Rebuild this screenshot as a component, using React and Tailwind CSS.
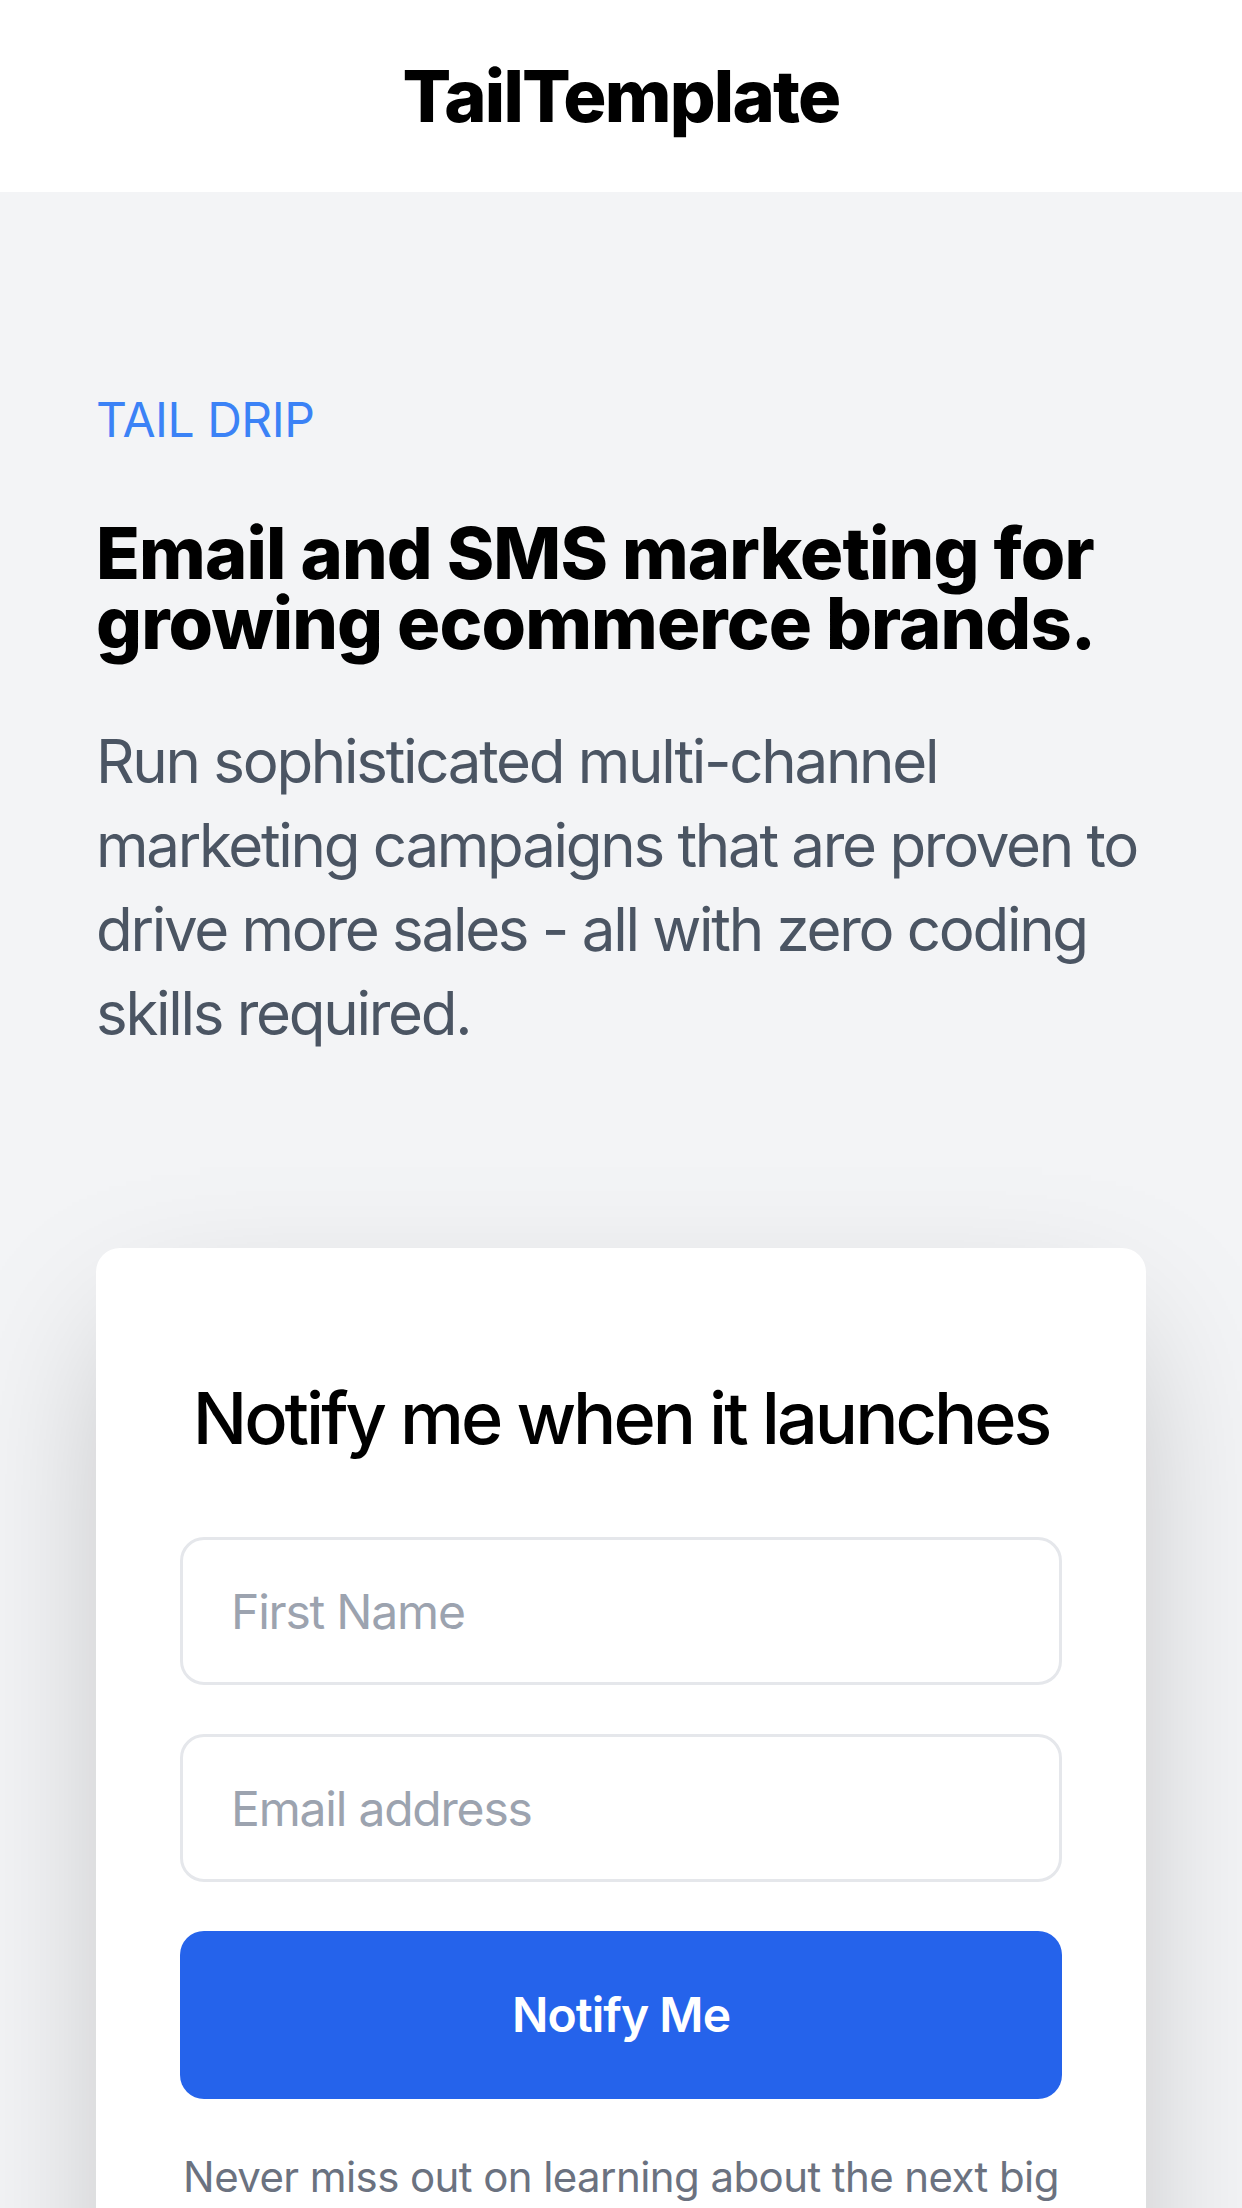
import React from "react";

const App = () => {
  return (
    <div className="min-h-screen bg-[#f3f4f6] font-['Inter','Noto_Sans',sans-serif]">
      {/* Header */}
      <header className="bg-white py-[48px]">
        <h1 className="text-center text-[72px] leading-[96px] font-extrabold tracking-tight text-black">
          TailTemplate
        </h1>
      </header>

      {/* Hero */}
      <main className="px-[96px] pt-[192px] pb-[192px]">
        <p className="text-[48px] leading-[72px] text-[#3b82f6] uppercase tracking-[-0.01em]">Tail Drip</p>
        <h2 className="mt-[62px] text-[72px] leading-[70px] font-extrabold tracking-[-0.012em] text-black">
          Email and SMS marketing for growing ecommerce brands.
        </h2>
        <p className="mt-[61px] text-[60px] leading-[84px] tracking-[-0.038em] text-[#4b5563]">
          Run sophisticated multi-channel marketing campaigns that are proven to drive more sales - all with zero coding
          skills required.
        </p>

        {/* Signup card */}
        <div className="mt-[193px] rounded-[24px] bg-white px-[84px] pt-[122px] pb-[96px] shadow-[0_60px_150px_-30px_rgba(0,0,0,0.25)]">
          <h3 className="whitespace-nowrap text-center text-[72px] leading-[96px] font-medium tracking-[-0.042em] text-black">
            Notify me when it launches
          </h3>
          <form className="mt-[71px] flex flex-col gap-[49px]" onSubmit={(e) => e.preventDefault()}>
            <input
              type="text"
              placeholder="First Name"
              className="h-[148px] w-full rounded-[24px] border-[3px] border-[#e5e7eb] bg-white px-[48px] text-[48px] tracking-[-0.025em] text-gray-900 placeholder:text-[#9ca3af] outline-none"
            />
            <input
              type="email"
              placeholder="Email address"
              className="h-[148px] w-full rounded-[24px] border-[3px] border-[#e5e7eb] bg-white px-[48px] text-[48px] tracking-[-0.025em] text-gray-900 placeholder:text-[#9ca3af] outline-none"
            />
            <button
              type="submit"
              className="h-[168px] w-full rounded-[24px] bg-[#2563eb] text-[48px] font-semibold tracking-[-0.02em] text-white"
            >
              Notify Me
            </button>
          </form>
          <p className="mt-[48px] text-center text-[42px] leading-[60px] tracking-[-0.014em] text-[#6b7280]">
            Never miss out on learning about the next big launch. Sign up and be the first to know.
          </p>
        </div>
      </main>
    </div>
  );
};

export default App;
